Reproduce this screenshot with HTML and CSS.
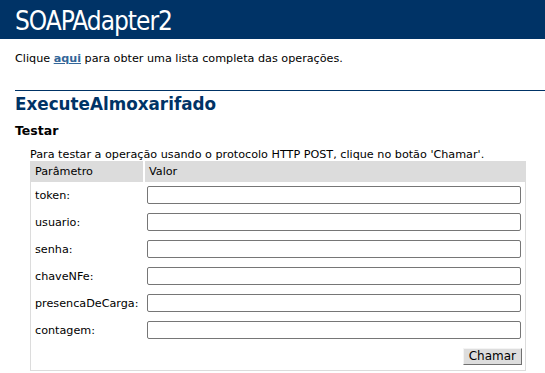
FILE: index.html
```
<!DOCTYPE html>
<html>
<head>
    <title>SOAPAdapter2 Serviço Web</title>
    <link rel="stylesheet" href="styles.css">
</head>
<body>
    <div class="heading1">SOAPAdapter2</div>
    <div id="content">
        <p class="intro">Clique <a href="#">aqui</a> para obter uma lista completa das operações.</p>

        <h2>ExecuteAlmoxarifado</h2>

        <!-- formulário de teste -->
        <h3>Testar</h3>
        <p class="frmtext">Para testar a operação usando o protocolo HTTP POST, clique no botão 'Chamar'.</p>

        <form class="frm" action="#">
            <table class="frmTable">
                <tr>
                    <td class="frmHeader first">Parâmetro</td>
                    <td class="frmHeader">Valor</td>
                </tr>
                <tr>
                    <td class="frmText">token:</td>
                    <td><input class="frmInput" type="text" name="token"></td>
                </tr>
                <tr>
                    <td class="frmText">usuario:</td>
                    <td><input class="frmInput" type="text" name="usuario"></td>
                </tr>
                <tr>
                    <td class="frmText">senha:</td>
                    <td><input class="frmInput" type="text" name="senha"></td>
                </tr>
                <tr>
                    <td class="frmText">chaveNFe:</td>
                    <td><input class="frmInput" type="text" name="chaveNFe"></td>
                </tr>
                <tr>
                    <td class="frmText">presencaDeCarga:</td>
                    <td><input class="frmInput" type="text" name="presencaDeCarga"></td>
                </tr>
                <tr>
                    <td class="frmText">contagem:</td>
                    <td><input class="frmInput" type="text" name="contagem"></td>
                </tr>
                <tr>
                    <td></td>
                    <td class="frmButton"><input class="button" type="submit" value="Chamar"></td>
                </tr>
            </table>
        </form>
    </div>
</body>
</html>
```
FILE: styles.css
```
body {
    color: #000000;
    background-color: white;
    font-family: "DejaVu Sans", Verdana, sans-serif;
    margin: 0;
}

.heading1 {
    color: #ffffff;
    font-family: "DejaVu Sans Condensed", "DejaVu Sans", sans-serif;
    font-size: 26px;
    letter-spacing: -1px;
    background-color: #003366;
    height: 39px;
    box-sizing: border-box;
    padding-top: 6px;
    padding-left: 15px;
    line-height: 30px;
}

#content {
    padding-left: 15px;
    font-size: 11.2px;
}

a:link, a:visited {
    color: #336699;
    font-weight: bold;
    text-decoration: underline;
}

.intro {
    margin: 13px 0 0 0;
    line-height: 14px;
}

h2 {
    font-size: 16.8px;
    font-weight: bold;
    margin: 24px 0 0 0;
    padding-top: 3px;
    line-height: 20px;
    border-top: 1px solid #003366;
    color: #003366;
}

h3 {
    font-size: 12.5px;
    color: #000000;
    margin: 9px 0 0 0;
    line-height: 16px;
}

.frmtext {
    margin: 9px 0 0 15px;
    line-height: 13px;
}

.frm {
    margin: 0 0 0 15px;
}

/* tabela do formulário */
.frmTable {
    border-collapse: collapse;
    border: 1px solid #dcdcdc;
    width: 496px;
}

.frmTable td {
    padding: 4px 4px 5px 4px;
    vertical-align: middle;
}

.frmTable td.frmHeader {
    background: #dcdcdc;
    padding: 3px 4px 3px 4px;
    line-height: 14px;
}

.frmTable td.first {
    width: 104px;
    border-right: 2px solid white;
}

.frmText {
    color: #000000;
    font-weight: normal;
}

.frmInput {
    display: block;
    width: 374px;
    height: 18px;
    box-sizing: border-box;
    margin: 0 0 0 -1px;
    border: 1px solid #767676;
    border-radius: 2px;
    font-family: "DejaVu Sans", Verdana, sans-serif;
    font-size: 11.2px;
    background: white;
}

.frmButton {
    text-align: right;
}

.button {
    font-family: "DejaVu Sans", Verdana, sans-serif;
    font-size: 12px;
    height: 17px;
    padding: 0 5px;
    margin-right: -1px;
    background: #dddddd;
    border: 1px solid;
    border-color: #f4f4f4 #707070 #707070 #f4f4f4;
    line-height: 13px;
}
```
